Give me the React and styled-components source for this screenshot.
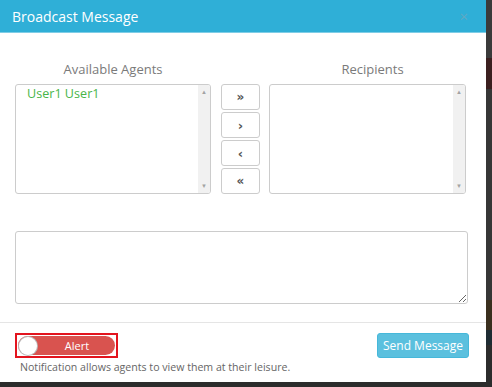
import styled, { createGlobalStyle } from "styled-components";

const GlobalStyle = createGlobalStyle`
  html, body {
    margin: 0;
    padding: 0;
  }
  body {
    width: 492px;
    height: 387px;
    overflow: hidden;
    font-family: "Open Sans", "Liberation Sans", sans-serif;
    background: linear-gradient(
      to bottom,
      #3a3a3a 0,
      #3a3a3a 58px,
      #3b1f1f 58px,
      #3b1f1f 89px,
      #363636 89px,
      #363636 300px,
      #3a2f1e 300px,
      #3a2f1e 330px,
      #1e2c33 330px,
      #1e2c33 345px,
      #2c2c2c 345px
    );
  }
`;

const Modal = styled.div`
  width: 486px;
  height: 382px;
  background: #ffffff;
  display: flex;
  flex-direction: column;
`;

const Header = styled.div`
  height: 33px;
  background: #2fafd7;
  border-bottom: 1px solid #7fcde6;
  display: flex;
  align-items: center;
  justify-content: space-between;
  padding: 0 18px 0 12px;
`;

const Title = styled.h4`
  margin: 0;
  font-size: 14px;
  font-weight: 400;
  color: #ffffff;
`;

const Close = styled.span`
  color: #5fa9c3;
  font-size: 15px;
  line-height: 1;
`;

const Body = styled.div`
  padding: 27px 18px 18px 15px;
  display: flex;
  flex-direction: column;
  gap: 37px;
`;

const ListRow = styled.div`
  display: flex;
  align-items: flex-end;
`;

const ListColumn = styled.div`
  width: ${(p) => p.width}px;
  display: flex;
  flex-direction: column;
`;

const ListLabel = styled.div`
  text-align: center;
  color: #7a7a7a;
  font-size: 13px;
  line-height: 18px;
  margin-bottom: 6px;
  padding-left: ${(p) => p.shift || 0}px;
`;

const ListBox = styled.div`
  height: 108px;
  border: 1px solid #cccccc;
  border-radius: 3px;
  display: flex;
  overflow: hidden;
`;

const ListItems = styled.div`
  flex: 1;
  padding: 1px 11px;
`;

const ListItem = styled.div`
  color: #48b548;
  font-size: 12.6px;
  line-height: 16px;
`;

const Scrollbar = styled.div`
  width: 12px;
  background: #f1f1f1;
  display: flex;
  flex-direction: column;
  justify-content: space-between;
  align-items: center;
  padding: 3px 0;
  color: #a3a3a3;
  font-size: 6px;
  line-height: 8px;
`;

const MoveButtons = styled.div`
  width: 39px;
  margin: 0 9px 0 10px;
  display: flex;
  flex-direction: column;
  gap: 2px;
`;

const MoveButton = styled.button`
  height: 26px;
  border: 1px solid #cccccc;
  border-radius: 3px;
  background: #ffffff;
  color: #555555;
  font-family: "DejaVu Sans", sans-serif;
  font-size: ${(p) => (p.double ? "12px" : "13px")};
  font-weight: 700;
  padding: 0;
  display: flex;
  align-items: center;
  justify-content: center;
`;

const MessageBox = styled.textarea`
  width: 453px;
  height: 73px;
  box-sizing: border-box;
  border: 1px solid #cccccc;
  border-radius: 3px;
  margin: 0;
  font-family: inherit;
  display: block;
`;

const Footer = styled.div`
  margin-top: auto;
  border-top: 1px solid #e5e5e5;
  padding: 10px 17px 7px 15px;
  display: flex;
  justify-content: space-between;
  align-items: flex-start;
`;

const AlertGroup = styled.div`
  display: flex;
  flex-direction: column;
  gap: 2px;
`;

const ToggleFrame = styled.div`
  width: 97px;
  height: 19px;
  border: 2px solid #e3141e;
  padding: 1px 1px;
  display: flex;
`;

const Toggle = styled.div`
  flex: 1;
  background: #d9534f;
  border-radius: 10px;
  display: flex;
  align-items: center;
  padding-left: 1px;
`;

const Knob = styled.span`
  width: 18px;
  height: 18px;
  border-radius: 50%;
  background: #ffffff;
  box-shadow: 0 0 0 1px #bbbbbb;
`;

const ToggleText = styled.span`
  flex: 1;
  text-align: center;
  color: #ffffff;
  font-size: 11px;
  padding-left: 2px;
`;

const HelpText = styled.div`
  color: #666666;
  font-size: 10.6px;
  line-height: 15px;
  padding-left: 5px;
`;

const SendButton = styled.button`
  width: 92px;
  height: 25px;
  margin-top: 0;
  background: #5bc0de;
  border: 1px solid #46b8da;
  border-radius: 3px;
  color: #ffffff;
  font-family: inherit;
  font-size: 12px;
  padding: 0;
`;

function AgentList({ items }) {
  return (
    <ListBox>
      <ListItems>
        {items.map((item) => (
          <ListItem key={item}>{item}</ListItem>
        ))}
      </ListItems>
      <Scrollbar>
        <span>▲</span>
        <span>▼</span>
      </Scrollbar>
    </ListBox>
  );
}

export default function App() {
  return (
    <>
      <GlobalStyle />
      <Modal>
        <Header>
          <Title>Broadcast Message</Title>
          <Close>×</Close>
        </Header>
        <Body>
          <ListRow>
            <ListColumn width={196}>
              <ListLabel>Available Agents</ListLabel>
              <AgentList items={["User1 User1"]} />
            </ListColumn>
            <MoveButtons>
              <MoveButton double>»</MoveButton>
              <MoveButton>›</MoveButton>
              <MoveButton>‹</MoveButton>
              <MoveButton double>«</MoveButton>
            </MoveButtons>
            <ListColumn width={197}>
              <ListLabel shift={10}>Recipients</ListLabel>
              <AgentList items={[]} />
            </ListColumn>
          </ListRow>
          <MessageBox />
        </Body>
        <Footer>
          <AlertGroup>
            <ToggleFrame>
              <Toggle>
                <Knob />
                <ToggleText>Alert</ToggleText>
              </Toggle>
            </ToggleFrame>
            <HelpText>Notification allows agents to view them at their leisure.</HelpText>
          </AlertGroup>
          <SendButton>Send Message</SendButton>
        </Footer>
      </Modal>
    </>
  );
}
